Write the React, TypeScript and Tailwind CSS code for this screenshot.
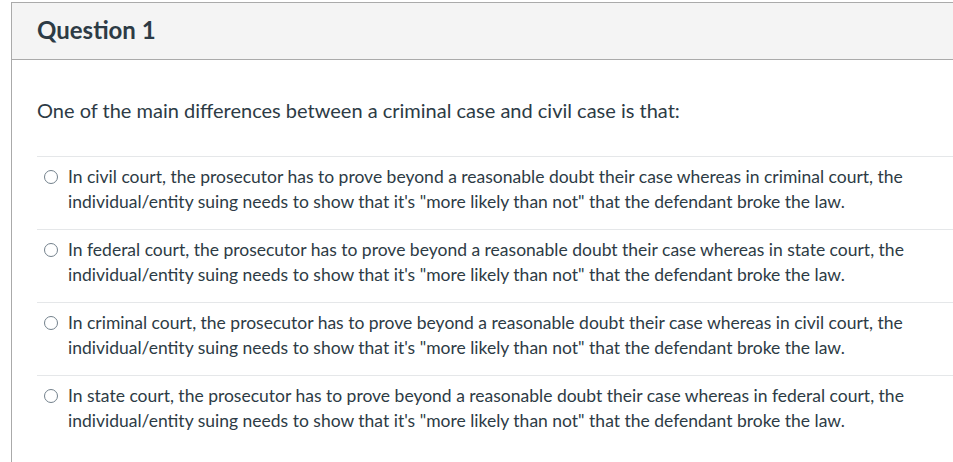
const answers = [
  "In civil court, the prosecutor has to prove beyond a reasonable doubt their case whereas in criminal court, the individual/entity suing needs to show that it's \"more likely than not\" that the defendant broke the law.",
  "In federal court, the prosecutor has to prove beyond a reasonable doubt their case whereas in state court, the individual/entity suing needs to show that it's \"more likely than not\" that the defendant broke the law.",
  "In criminal court, the prosecutor has to prove beyond a reasonable doubt their case whereas in civil court, the individual/entity suing needs to show that it's \"more likely than not\" that the defendant broke the law.",
  "In state court, the prosecutor has to prove beyond a reasonable doubt their case whereas in federal court, the individual/entity suing needs to show that it's \"more likely than not\" that the defendant broke the law.",
];

export default function App() {
  return (
    <div className="h-[462px] w-[953px] overflow-hidden bg-white pt-[2px] pl-[11px] font-['Lato','Liberation_Sans',sans-serif] text-[#2d3b45]">
      <div className="h-[470px] w-[960px] border-t border-l border-[#aaaaaa]">
        {/* Header */}
        <div className="flex h-[57px] items-center border-b border-[#aaaaaa] bg-[#f4f4f4] pb-[3px] pl-[25px]">
          <h2 className="text-[24px] font-bold leading-none">Question 1</h2>
        </div>

        {/* Body */}
        <div className="pl-[25px]">
          <p className="pt-[38px] pb-[34px] text-[20px] leading-[24px]">
            One of the main differences between a criminal case and civil case is that:
          </p>

          {answers.map((a) => (
            <div key={a} className="flex border-t border-[#e5e7e9] pt-[8px] pb-[15px]">
              <span className="mt-[5px] ml-[7px] h-[14px] w-[14px] shrink-0 rounded-full border border-[#73818c] bg-white" />
              <p className="ml-[10px] w-[860px] text-[17.5px] leading-[24.5px]">{a}</p>
            </div>
          ))}
        </div>
      </div>
    </div>
  );
}
